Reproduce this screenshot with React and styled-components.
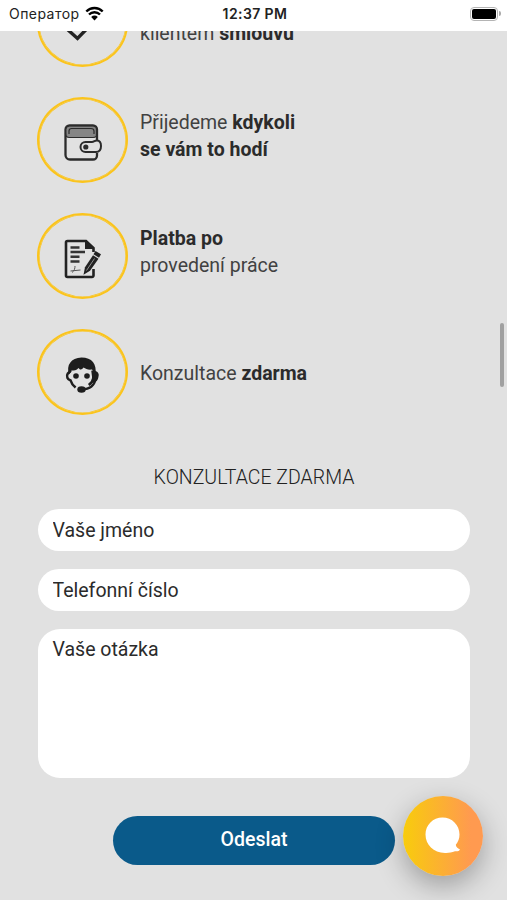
import React from "react";
import styled, { createGlobalStyle } from "styled-components";

const WalletIcon = () => (
	<svg width="38" height="38" viewBox="0 0 38 38" fill="none">
		<rect x="2.500" y="2.500" width="30" height="11.500" rx="4" fill="#858585" />
		<path
			d="M33 18V5.500a4 4 0 0 0-4-4H5.500a4 4 0 0 0-4 4V31a4.500 4.500 0 0 0 4.500 4.500H29a4 4 0 0 0 4-4V29"
			stroke="#2b2b2b"
			strokeWidth="2.300"
		/>
		<path
			d="M1.500 9.500c0 3 1.500 4 4 4H29c2.500 0 4-1 4-3.500M5 10V7c0-1.500 1-2.500 2.500-2.500h19.500c2 0 3 1 3 2.500v3"
			stroke="#2b2b2b"
			strokeWidth="1.200"
		/>
		<path
			d="M33 16.500c3 .2 4 2.500 4 5.500 0 4-1.500 6-5 6H21.500a5 5 0 0 1 0-10H28c2 0 3-1.700 5-1.500z"
			fill="#e1e1e1"
			stroke="#2b2b2b"
			strokeWidth="2"
		/>
		<circle cx="21.800" cy="23" r="2.600" fill="#2b2b2b" />
	</svg>
);

const ContractIcon = () => (
	<svg width="38" height="40" viewBox="0 0 38 40" fill="none">
		<path
			d="M29.500 13V9L22 2H3.500A1.500 1.500 0 0 0 2 3.500v33A1.500 1.500 0 0 0 3.500 38H28a1.500 1.500 0 0 0 1.500-1.500V30"
			stroke="#222"
			strokeWidth="2.600"
		/>
		<path d="M21 1.500v8.500h9z" fill="#222" />
		<path d="M6.500 8.500h9M6.500 13h14.500M6.500 17.800h9M6.500 22.500h9" stroke="#333" strokeWidth="2.400" />
		<path
			d="M11 27c0 2-.5 5-3 6.500M6.500 32l10-1"
			stroke="#555"
			strokeWidth="1"
		/>
		<path d="M31.500 12l5.500 3.200-2 3.500-5.500-3.500z" fill="#222" />
		<path d="M29 16.200l5.500 3.500-8.500 12-6.500 4 1.500-7.500z" fill="#222" />
		<path d="M30.500 19.500l-8 12" stroke="#aaa" strokeWidth=".8" />
	</svg>
);

const SupportIcon = () => (
	<svg width="36" height="38" viewBox="0 0 36 38" fill="none">
		<path
			d="M4 18.500C1 9 6 2 16.500 1.500 27 1.500 32 8 30.500 18.500l-3.500-5c-4 .5-6-.5-8.500-2-1 1.500-2 2-3.500 2l-1.500-1.500c-2 2.500-4.500 2.500-7 2.500z"
			fill="#1d1d1d"
		/>
		<path
			d="M5.500 14.500c-.7 2-1.500 1.500-2.700 3-1.800 2.800-.3 6 2.800 7 .8 3 2.500 5 5 7M27.500 14.500l1 8c-.7 3-2.300 4.800-4.800 6.500"
			stroke="#1d1d1d"
			strokeWidth="2.500"
		/>
		<path d="M28.500 14.500c4 .5 6 3 5 6-.5 4-2.500 6.500-7.500 6z" fill="#1d1d1d" />
		<path d="M30.500 23c-1 6.500-5.500 10-13.500 10.500" stroke="#1d1d1d" strokeWidth="2.200" />
		<circle cx="11" cy="20" r="2.800" fill="#1d1d1d" />
		<circle cx="22" cy="20" r="2.800" fill="#1d1d1d" />
		<ellipse cx="16.500" cy="33.500" rx="4.200" ry="3.200" fill="#1d1d1d" />
	</svg>
);

const CheckIcon = () => (
	<svg width="38" height="38" viewBox="0 0 38 38" fill="none">
		<path d="M3 21l10.500 9.500L25 18.500" stroke="#222" strokeWidth="3.400" />
	</svg>
);

const App = () => {
	return (
		<Screen>
			<GlobalStyle />
			<StatusBar>
				<Carrier>
					Оператор
					<svg width="19" height="15" viewBox="0 0 19 15">
						<path
							d="M1.300 5.500a11.500 11.500 0 0 1 16.400 0M4 8.500a7.700 7.700 0 0 1 11 0"
							fill="none"
							stroke="#000"
							strokeWidth="2.400"
						/>
						<path d="M9.500 14.500l-3.300-3.600a4.700 4.700 0 0 1 6.600 0z" />
					</svg>
				</Carrier>
				<Time>12:37 PM</Time>
				<BatteryHolder>
					<Battery>
						<Charge />
					</Battery>
					<BatteryTip />
				</BatteryHolder>
			</StatusBar>

			<Page>
				<Benefits>
					<Benefit>
						<Circle>
							<CheckIcon />
						</Circle>
						<BenefitText $top={19}>
							klientem <b>smlouvu</b>
						</BenefitText>
					</Benefit>
					<Benefit>
						<Circle>
							<WalletIcon />
						</Circle>
						<BenefitText $top={-8}>
							Přijedeme <b>kdykoli</b>
							<br />
							<b>se vám to hodí</b>
						</BenefitText>
					</Benefit>
					<Benefit>
						<Circle>
							<ContractIcon />
						</Circle>
						<BenefitText $top={-8}>
							<b>Platba po</b>
							<br />
							provedení práce
						</BenefitText>
					</Benefit>
					<Benefit>
						<Circle>
							<SupportIcon />
						</Circle>
						<BenefitText $top={2}>
							Konzultace <b>zdarma</b>
						</BenefitText>
					</Benefit>
				</Benefits>

				<Form>
					<Title>Konzultace zdarma</Title>
					<Input placeholder="Vaše jméno" />
					<Input placeholder="Telefonní číslo" />
					<InputArea placeholder="Vaše otázka" />
					<Button type="button">Odeslat</Button>
				</Form>
			</Page>

			<ScrollThumb />
			<ChatButton>
				<svg width="36" height="37" viewBox="0 0 36 37">
					<path
						d="M17.500.5C27 .5 34.500 8 34.500 17.500c0 4-1.300 7.500-3.700 10.300.2 2 1.700 3.700 4.200 4.700-.5 1.500-2.500 2-5 1.800-3.500 1.200-6.500 1.900-10 1.700C8.500 35.500.5 28 .5 17.500.5 8 8 .5 17.500.5z"
						fill="#fff"
					/>
				</svg>
			</ChatButton>
		</Screen>
	);
};

export default App;

const GlobalStyle = createGlobalStyle`
	* {
		box-sizing: border-box;
	}
	body {
		margin: 0;
		background-color: #e1e1e1;
		font-family: Roboto, sans-serif;
	}
`;

const Screen = styled.div`
	position: relative;
	width: 507px;
	height: 900px;
	overflow: hidden;
	display: flex;
	flex-direction: column;
`;

const StatusBar = styled.div`
	height: 31px;
	flex-shrink: 0;
	padding: 0 6px 4px 9px;
	display: grid;
	grid-template-columns: 1fr auto 1fr;
	align-items: center;
	background-color: white;
	font-family: Inter, sans-serif;
	font-size: 14px;
	color: #222;
`;

const Carrier = styled.div`
	display: flex;
	align-items: center;
	gap: 5px;
	letter-spacing: 0.45px;
`;

const Time = styled.div`
	font-weight: 600;
	letter-spacing: 0.4px;
`;

const BatteryHolder = styled.div`
	display: flex;
	align-items: center;
	justify-content: flex-end;
	gap: 1px;
`;

const Battery = styled.div`
	width: 28px;
	height: 14px;
	padding: 1px;
	border: 1.5px solid #b4b4b4;
	border-radius: 4px;
`;

const Charge = styled.div`
	height: 100%;
	border-radius: 2px;
	background-color: black;
`;

const BatteryTip = styled.div`
	width: 2px;
	height: 5px;
	border-radius: 0 2px 2px 0;
	background-color: #aaa;
`;

const Page = styled.div`
	flex: 1;
	min-height: 0;
	overflow: hidden;
	padding: 0 37px;
`;

const Benefits = styled.div`
	display: flex;
	flex-direction: column;
	gap: 30px;
	margin-top: -50px;
`;

const Benefit = styled.div`
	height: 86px;
	display: flex;
	align-items: center;
	gap: 12px;
`;

const Circle = styled.div`
	width: 91px;
	height: 86px;
	flex-shrink: 0;
	padding-top: 6px;
	border: 2px solid #fbc41c;
	box-shadow: inset 0 0 0 0.6px #fbc41c;
	border-radius: 50%;
	display: flex;
	align-items: center;
	justify-content: center;
`;

const BenefitText = styled.div`
	margin-top: ${({ $top }) => $top}px;
	font-size: 19.5px;
	line-height: 27px;
	color: #414141;

	b {
		font-weight: 700;
		color: #2b2b2b;
	}
`;

const Form = styled.div`
	display: flex;
	flex-direction: column;
	align-items: center;
	padding: 0 0 0 1px;
`;

const Title = styled.div`
	margin: 49px 0 18px;
	font-size: 19.5px;
	line-height: 27px;
	font-weight: 300;
	text-transform: uppercase;
	color: #222;
`;

const Input = styled.input`
	width: 432px;
	height: 42px;
	margin-bottom: 18px;
	padding: 0 14.5px;
	border: 0;
	outline: none;
	border-radius: 21px;
	background-color: white;
	font-family: Roboto, sans-serif;
	font-size: 19.5px;

	&::placeholder {
		color: #2b2b2b;
		opacity: 1;
	}
`;

const InputArea = styled.textarea`
	width: 432px;
	height: 149px;
	padding: 7px 14.5px;
	border: 0;
	outline: none;
	resize: none;
	border-radius: 22px;
	background-color: white;
	font-family: Roboto, sans-serif;
	font-size: 19.5px;
	line-height: 27px;

	&::placeholder {
		color: #2b2b2b;
		opacity: 1;
	}
`;

const Button = styled.button`
	width: 282px;
	height: 49px;
	margin-top: 38px;
	padding: 0 0 2px;
	border: 0;
	outline: none;
	border-radius: 25px;
	background-color: #0a5a8a;
	color: white;
	font-family: Roboto, sans-serif;
	font-size: 19.5px;
	font-weight: 500;

	&:hover {
		cursor: pointer;
	}
`;

const ScrollThumb = styled.div`
	position: absolute;
	top: 323px;
	right: 3px;
	width: 4px;
	height: 64px;
	border-radius: 2px;
	background-color: #a0a0a0;
`;

const ChatButton = styled.div`
	position: absolute;
	right: 24.5px;
	bottom: 24.5px;
	width: 80px;
	height: 80px;
	border-radius: 50%;
	display: flex;
	align-items: center;
	justify-content: center;
	background: linear-gradient(90deg, #f8cc0c, #ff9a50 85%);
	box-shadow: 0 10px 28px rgba(0, 0, 0, 0.3);
`;
